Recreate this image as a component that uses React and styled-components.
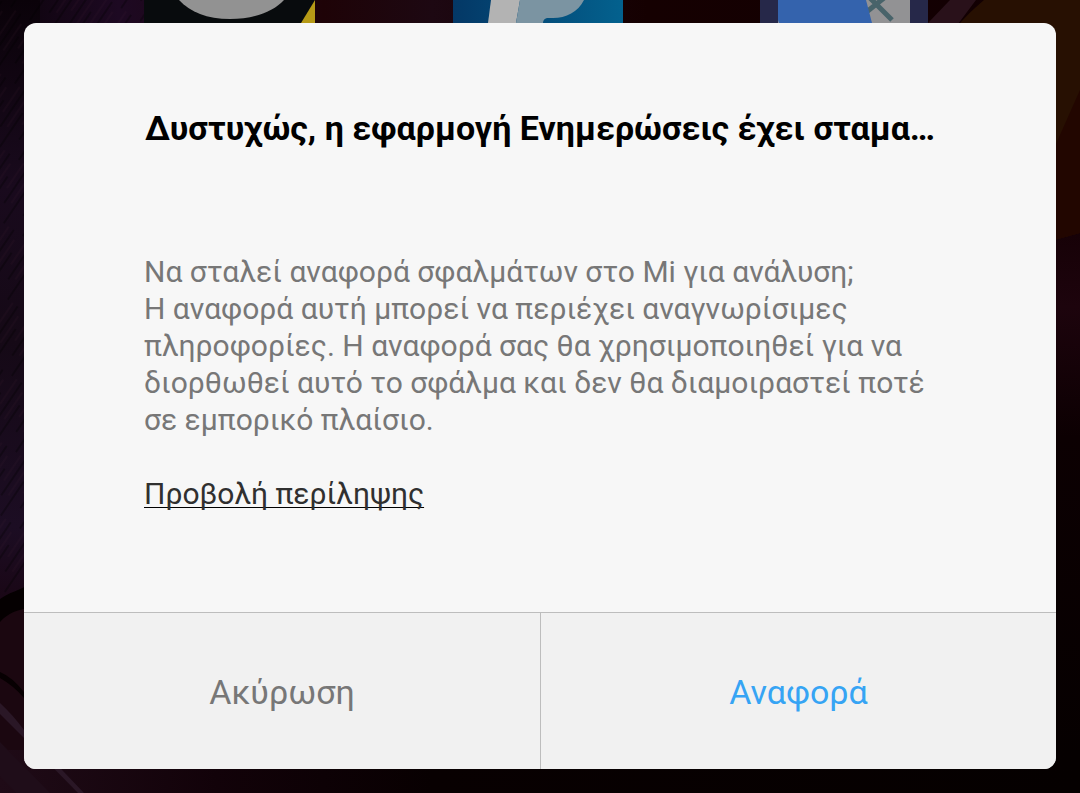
import React from 'react';
import styled, { createGlobalStyle } from 'styled-components';

const GlobalStyle = createGlobalStyle`
  * {
    box-sizing: border-box;
  }

  body {
    margin: 0;
    background: #050002;
    font-family: Roboto, "Noto Sans", sans-serif;
  }
`;

const Screen = styled.div`
  position: relative;
  display: flex;
  flex-direction: column;
  min-height: 100vh;
  padding-bottom: 24px;
`;

const Backdrop = styled.svg`
  position: absolute;
  inset: 0;
  width: 100%;
  height: 100%;
  z-index: -1;
`;

const HomeRow = styled.div`
  display: flex;
  justify-content: space-between;
  height: 23px;
  padding: 0 152px 0 144px;
  overflow: hidden;

  svg {
    display: block;
    flex: none;
  }
`;

const Dialog = styled.section`
  display: flex;
  flex: 1;
  flex-direction: column;
  margin: 0 24px;
  border-radius: 12px;
  background: #f7f7f7;
  overflow: hidden;
`;

const Content = styled.div`
  flex: 1;
  padding: 85px 120px 95px;
`;

const Title = styled.h1`
  margin: 0 0 105px;
  color: #000;
  font-size: 34px;
  font-weight: 700;
  line-height: 40px;
  text-align: center;
`;

const Message = styled.p`
  margin: 0 0 37px;
  color: #777;
  font-size: 30px;
  line-height: 37px;
`;

const SummaryLink = styled.a`
  color: #303030;
  font-size: 30px;
  line-height: 37px;
  text-decoration: underline #000 1px;
  text-decoration-skip-ink: none;
  text-underline-offset: 3px;
`;

const Actions = styled.div`
  display: grid;
  grid-template-columns: 1fr 1fr;
  height: 157px;
  border-top: 1px solid #bdbdbd;
`;

const Action = styled.button`
  padding: 2px 0 0;
  border: 0;
  background: #f1f1f1;
  color: ${props => (props.$primary ? '#36a4f4' : '#777')};
  font-family: inherit;
  font-size: 34px;
  cursor: pointer;

  & + & {
    border-left: 1px solid #bdbdbd;
  }
`;

const Wallpaper = () => (
  <Backdrop viewBox="0 0 1080 793" preserveAspectRatio="none" aria-hidden="true">
    <defs>
      <linearGradient id="top" x1="0" x2="1" y1="0" y2="0">
        <stop offset="0" stopColor="#0c030b" />
        <stop offset="0.11" stopColor="#1d0922" />
        <stop offset="0.3" stopColor="#1e0307" />
        <stop offset="0.4" stopColor="#1d0812" />
        <stop offset="0.6" stopColor="#150001" />
        <stop offset="1" stopColor="#120003" />
      </linearGradient>
      <linearGradient id="left" x1="0" x2="0" y1="0" y2="1">
        <stop offset="0" stopColor="#0a0209" />
        <stop offset="0.3" stopColor="#190a1d" />
        <stop offset="0.55" stopColor="#150916" />
        <stop offset="0.85" stopColor="#1c0d23" />
        <stop offset="1" stopColor="#190512" />
      </linearGradient>
      <linearGradient id="right" x1="0" x2="0" y1="0" y2="1">
        <stop offset="0" stopColor="#140004" />
        <stop offset="0.18" stopColor="#1d040d" />
        <stop offset="0.4" stopColor="#0c0002" />
        <stop offset="1" stopColor="#050000" />
      </linearGradient>
      <linearGradient id="bottom" x1="0" x2="1" y1="0" y2="0">
        <stop offset="0" stopColor="#1f0b17" />
        <stop offset="0.2" stopColor="#120209" />
        <stop offset="0.4" stopColor="#080001" />
        <stop offset="1" stopColor="#050000" />
      </linearGradient>
      <pattern id="grain" width="23" height="61" patternUnits="userSpaceOnUse" patternTransform="rotate(34)">
        <path d="M2 0V44M13 20V61" stroke="#000" strokeWidth="2" opacity="0.3" />
        <path d="M8 8V40M19 0V30" stroke="#4a2138" strokeWidth="1" opacity="0.2" />
      </pattern>
    </defs>
    <rect width="1080" height="40" fill="url(#top)" />
    <rect width="40" height="620" fill="url(#left)" />
    <rect width="144" height="600" fill="url(#grain)" />
    <rect x="1040" y="200" width="40" height="593" fill="url(#right)" />
    <rect y="600" width="40" height="193" fill="#1b0710" />
    <rect y="750" width="1080" height="43" fill="url(#bottom)" />
    <path d="M946 40C958 24 972 10 984 0H1080V233L1040 244V40Z" fill="#271002" />
    <path d="M1080 90L1040 180V244L1080 233Z" fill="#220600" />
    <path d="M928 23L950 0H976L946 40Z" fill="#29111a" />
    <path d="M0 599C10 592 18 591 28 585V608C18 610 9 612 0 622Z" fill="#050001" />
    <path d="M0 672Q12 677 24 692V698Q14 686 0 678Z" fill="#070002" />
    <path d="M0 703Q13 715 24 730L84 793H78L24 738L0 714Z" fill="#2a1726" />
    <path d="M0 742L50 793H16L0 776Z" fill="#1f0d19" />
  </Backdrop>
);

const CameraIcon = () => (
  <svg width="171" height="23" aria-hidden="true">
    <rect width="171" height="23" fill="#080b0d" />
    <path d="M35 0C46 12 63 19 86 19S129 12 140 0Z" fill="#929292" />
    <path d="M171 0V23H157Z" fill="#b69a16" />
  </svg>
);

const PaymentIcon = () => (
  <svg width="170" height="23" aria-hidden="true">
    <defs>
      <linearGradient id="payment" x1="0" x2="1" y1="0" y2="0">
        <stop offset="0" stopColor="#043866" />
        <stop offset="1" stopColor="#03618e" />
      </linearGradient>
    </defs>
    <rect width="170" height="23" fill="url(#payment)" />
    <path d="M38 0H67L63 23H35Z" fill="#b3b3b3" />
    <path d="M67 0H131C125 12 113 18 100 18H94Q90 19 90 23H63Z" fill="#7b94a2" />
  </svg>
);

const MapsIcon = () => (
  <svg width="168" height="23" aria-hidden="true">
    <rect width="168" height="23" fill="#262849" />
    <path d="M18 0H150V23H18Z" fill="#929294" />
    <path d="M124 -2L104 14M108 -4L132 20" fill="none" stroke="#48636a" strokeWidth="5" />
    <path d="M18 0H106L112 23H19L18 20Z" fill="#3463ad" />
  </svg>
);

const App = () => {
  return (
    <Screen>
      <GlobalStyle />
      <Wallpaper />
      <HomeRow>
        <CameraIcon />
        <PaymentIcon />
        <MapsIcon />
      </HomeRow>
      <Dialog role="dialog" aria-labelledby="dialog-title">
        <Content>
          <Title id="dialog-title">Δυστυχώς, η εφαρμογή Ενημερώσεις έχει σταμα…</Title>
          <Message>
            Να σταλεί αναφορά σφαλμάτων στο Mi για ανάλυση;
            <br />
            Η αναφορά αυτή μπορεί να περιέχει αναγνωρίσιμες πληροφορίες. Η αναφορά σας θα
            χρησιμοποιηθεί για να διορθωθεί αυτό το σφάλμα και δεν θα διαμοιραστεί ποτέ σε
            εμπορικό πλαίσιο.
          </Message>
          <SummaryLink href="#summary">Προβολή περίληψης</SummaryLink>
        </Content>
        <Actions>
          <Action type="button">Ακύρωση</Action>
          <Action type="button" $primary>Αναφορά</Action>
        </Actions>
      </Dialog>
    </Screen>
  );
};

export default App;
